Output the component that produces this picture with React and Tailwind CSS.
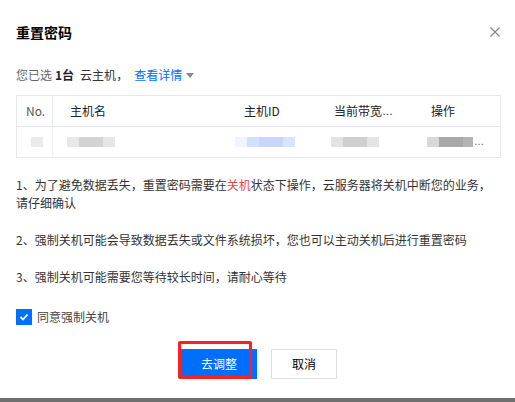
import React from 'react';

const font = { fontFamily: '"Noto Sans CJK SC", "Noto Sans", sans-serif' };

const columns = [
    { label: 'No.', cls: 'w-[36px] pl-[9px]' },
    { label: '主机名', cls: 'w-[174px] pl-[17px]' },
    { label: '主机ID', cls: 'w-[90px] pl-[17px]' },
    { label: '当前带宽', cls: 'w-[97px] pl-[17px]', more: true },
    { label: '操作', cls: 'flex-1 pl-[17px]' },
];

// blurred placeholder made of pixel-ish tiles
function Blob({ tiles }) {
    return (
        <div className="flex h-[10px] blur-[0.6px]">
            {tiles.map(([w, c], i) => (
                <div key={i} className="h-full" style={{ width: w, background: c }} />
            ))}
        </div>
    );
}

export default function App() {
    return (
        <div className="flex h-[402px] w-[515px] flex-col bg-white" style={font}>
            {/* ─── Dialog ─── */}
            <div className="relative flex flex-1 flex-col pl-4 pr-[14px] pt-[22px]">
                <div className="flex h-5 items-center justify-between">
                    <h2 className="text-[14px] font-bold leading-5 text-black">重置密码</h2>
                    <svg className="mr-[1px] h-[10px] w-[10px]" viewBox="0 0 10 10" fill="none" stroke="#888" strokeWidth="1.2">
                        <path d="M0.5 0.5 L9.5 9.5 M9.5 0.5 L0.5 9.5" />
                    </svg>
                </div>

                <p className="mt-6 flex items-center text-[12px] leading-[18px] text-[#666]">
                    您已选
                    <span className="ml-[3px] font-bold text-[#222]">1台</span>
                    <span className="ml-[6px] text-[#333]">云主机</span>
                    <span className="text-[#333]">，</span>
                    <span className="ml-[6px] text-[#006eff]">查看详情</span>
                    <svg className="ml-[4px] h-[5px] w-[8px]" viewBox="0 0 8 5">
                        <path d="M0 0 L8 0 L4 5 Z" fill="#888" />
                    </svg>
                </p>

                {/* ─── Table ─── */}
                <div className="mt-[11px] border border-[#e5e8ee] text-[12px]">
                    <div className="flex h-[30px] items-center text-[#222]">
                        {columns.map((c, i) => (
                            <div
                                key={c.label}
                                className={`flex h-full items-center ${c.cls} ${i === 0 ? 'border-r border-[#e5e8ee] text-[#555]' : ''}`}
                            >
                                {c.label}
                                {c.more && <span className="font-['Liberation_Sans'] text-[11px]">…</span>}
                            </div>
                        ))}
                    </div>
                    <div className="flex h-[31px] items-center border-t border-[#e5e8ee]">
                        <div className="flex h-full w-[36px] items-center border-r border-[#f0f2f5] pl-[14px]">
                            <Blob tiles={[[12, '#ebebeb']]} />
                        </div>
                        <div className="flex w-[174px] items-center pl-[14px]">
                            <Blob tiles={[[12, '#e8e8e8'], [24, '#d3d3d3'], [12, '#e6e6e6']]} />
                        </div>
                        <div className="flex w-[90px] items-center pl-[8px]">
                            <Blob tiles={[[12, '#f0f4ff'], [12, '#d3dffc'], [24, '#c6d7fb'], [12, '#d8e3fd']]} />
                        </div>
                        <div className="flex w-[97px] items-center pl-[14px]">
                            <Blob tiles={[[12, '#e3e3e3'], [24, '#cfcfcf'], [12, '#e4e4e4']]} />
                        </div>
                        <div className="flex flex-1 items-center pl-[13px] text-[#555]">
                            <Blob tiles={[[12, '#d8d8d8'], [24, '#a8a8a8'], [10, '#b4b4b4']]} />
                            <span className="ml-[1px] font-['Liberation_Sans'] text-[10px] leading-none">…</span>
                        </div>
                    </div>
                </div>

                {/* ─── Notes ─── */}
                <div className="mt-[18px] flex flex-col gap-[19px] text-[12px] leading-[18px] text-[#333]">
                    <p>
                        1、为了避免数据丢失，重置密码需要在<span className="text-[#e54545]">关机</span>
                        状态下操作，云服务器将关机中断您的业务，请仔细确认
                    </p>
                    <p>2、强制关机可能会导致数据丢失或文件系统损坏，您也可以主动关机后进行重置密码</p>
                    <p>3、强制关机可能需要您等待较长时间，请耐心等待</p>
                </div>

                <label className="mt-[23px] flex items-center text-[12px] leading-4 text-[#444]">
                    <span className="flex h-4 w-4 items-center justify-center bg-[#006eff]">
                        <svg className="h-[10px] w-[10px]" viewBox="0 0 10 10" fill="none" stroke="white" strokeWidth="1.8">
                            <path d="M1.5 5 L4 7.5 L8.5 2.5" />
                        </svg>
                    </span>
                    <span className="ml-[5px]">同意强制关机</span>
                </label>

                {/* ─── Actions ─── */}
                <div className="mt-6 flex justify-center gap-[14px] pl-[1px]">
                    <button className="relative h-[30px] w-[76px] bg-[#006eff] text-[12px] text-white">
                        去调整
                        <span className="absolute -left-[3px] -top-[8px] h-[38px] w-[74px] rounded-[2px] border-[3px] border-[#ff1f1f]" />
                    </button>
                    <button className="h-[30px] w-[66px] border border-[#dddddd] bg-white text-[12px] text-black">
                        取消
                    </button>
                </div>
            </div>

            <div className="h-[4px] bg-[#6f6f6f]" />
        </div>
    );
}
